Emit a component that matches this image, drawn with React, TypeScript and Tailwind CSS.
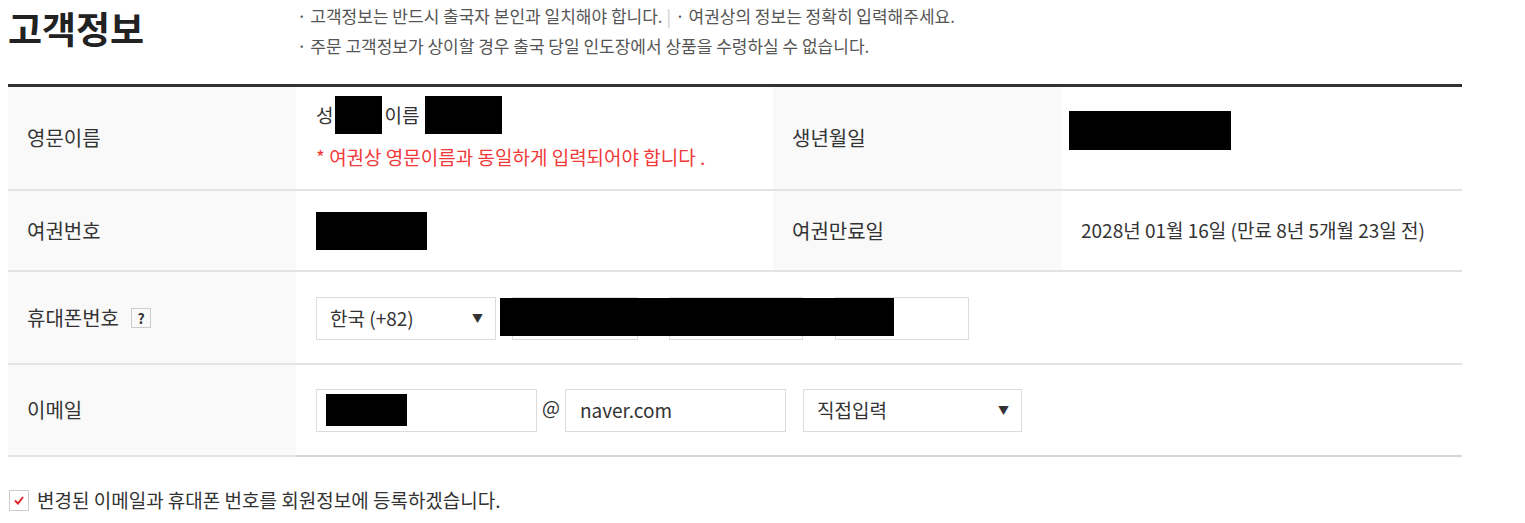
import React from "react";

const font = { fontFamily: '"Noto Sans CJK KR", "Noto Sans", sans-serif' };

function Label({ children, h }: { children: React.ReactNode; h: string }) {
  return (
    <div className={`${h} bg-[#f9f9f9] flex items-center pl-[19px] text-[20px] text-[#333] border-b-2 border-[#e3e3e3]`}>
      {children}
    </div>
  );
}

function Select({ text, w }: { text: string; w: string }) {
  return (
    <div className={`${w} h-[43px] border border-[#dcdcdc] flex items-center justify-between pl-[13px] pr-[12px] text-[19px] text-[#333]`}>
      <span>{text}</span>
      <span className="text-[11px] text-[#333]">▼</span>
    </div>
  );
}

export default function App() {
  return (
    <div className="bg-white w-[1525px] h-[523px] pl-2 text-[#333]" style={font}>
      <div className="w-[1454px]">
        <div className="flex h-[84px]">
          <h2 className="w-[289px] pt-[3px] text-[37px] font-bold text-[#222] leading-[50px]">고객정보</h2>
          <div className="pt-[1px] text-[17px] text-[#555] leading-[30px]">
            <p>
              · 고객정보는 반드시 출국자 본인과 일치해야 합니다.
              <span className="text-[#ccc] mx-1">|</span>· 여권상의 정보는 정확히 입력해주세요.
            </p>
            <p>· 주문 고객정보가 상이할 경우 출국 당일 인도장에서 상품을 수령하실 수 없습니다.</p>
          </div>
        </div>
        <div className="border-t-[3px] border-[#333] grid grid-cols-[288px_477px_289px_1fr]">
          <Label h="h-[104px]">영문이름</Label>
          <div className="pl-[20px] pt-[9px] border-b-2 border-[#e3e3e3]">
            <div className="flex items-center text-[19px] h-[38px]">
              <span>성</span>
              <span className="w-[47px] h-[38px] bg-black ml-[2px]" />
              <span className="ml-[2px]">이름</span>
              <span className="w-[77px] h-[38px] bg-black ml-[6px]" />
            </div>
            <p className="text-[#f03a3a] text-[19px] mt-[9px]">* 여권상 영문이름과 동일하게 입력되어야 합니다 .</p>
          </div>
          <Label h="h-[104px]">생년월일</Label>
          <div className="pl-[7px] pt-[24px] border-b-2 border-[#e3e3e3]">
            <div className="w-[162px] h-[39px] bg-black" />
          </div>

          <Label h="h-[81px]">여권번호</Label>
          <div className="flex items-center pl-[20px] border-b-2 border-[#e3e3e3]">
            <span className="w-[111px] h-[38px] bg-black" />
          </div>
          <Label h="h-[81px]">여권만료일</Label>
          <div className="flex items-center pl-[19px] text-[19px] border-b-2 border-[#e3e3e3]">
            2028년 01월 16일 (만료 8년 5개월 23일 전)
          </div>

          <Label h="h-[93px]">
            휴대폰번호
            <span className="ml-[12px] w-[20px] h-[20px] border border-[#ccc] text-[14px] font-bold flex items-center justify-center leading-none">
              ?
            </span>
          </Label>
          <div className="col-span-3 flex items-center pl-[20px] border-b-2 border-[#e3e3e3]">
            <div className="relative flex items-center mt-[2px]">
              <Select text="한국 (+82)" w="w-[180px]" />
              <div className="ml-[16px] w-[126px] h-[43px] border border-[#dcdcdc]" />
              <div className="ml-[31px] w-[134px] h-[43px] border border-[#dcdcdc]" />
              <div className="ml-[32px] w-[134px] h-[43px] border border-[#dcdcdc]" />
              <span className="absolute left-[184px] top-[1px] w-[394px] h-[38px] bg-black" />
            </div>
          </div>

          <Label h="h-[92px]">이메일</Label>
          <div className="col-span-3 flex items-center pl-[20px] border-b-2 border-[#d6d6d6]">
            <div className="w-[221px] h-[43px] border border-[#dcdcdc] flex items-center pl-[9px]">
              <span className="w-[81px] h-[32px] bg-black" />
            </div>
            <span className="ml-[5px] mr-[5px] text-[19px] -mt-[6px]">@</span>
            <div className="w-[221px] h-[43px] border border-[#dcdcdc] flex items-center pl-[14px] text-[19px]">
              naver.com
            </div>
            <div className="ml-[17px]">
              <Select text="직접입력" w="w-[219px]" />
            </div>
          </div>
        </div>
        <label className="flex items-center mt-[29px] text-[19px] text-[#333]">
          <span className="w-[20px] h-[21px] border border-[#ccc] flex items-center justify-center ml-[1px]">
            <svg width="10" height="9" viewBox="0 0 10 9">
              <path d="M1 4.5 L4 7.5 L9 1" stroke="#e0242b" strokeWidth="2" fill="none" />
            </svg>
          </span>
          <span className="ml-[8px]">변경된 이메일과 휴대폰 번호를 회원정보에 등록하겠습니다.</span>
        </label>
      </div>
    </div>
  );
}
